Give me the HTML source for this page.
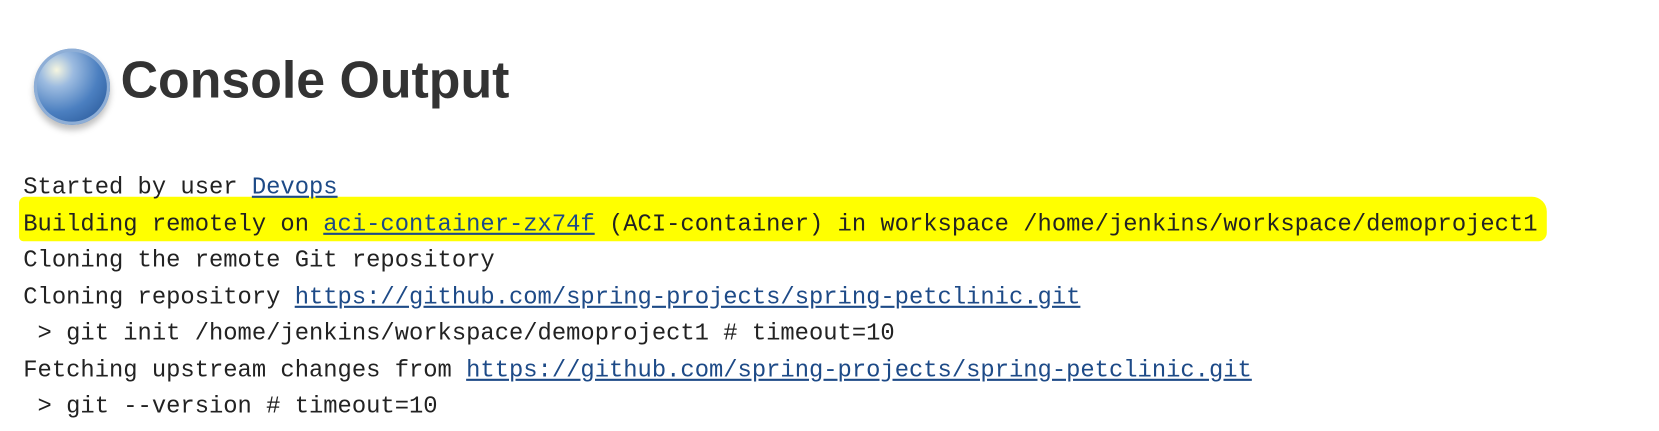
<!DOCTYPE html>
<html style="margin:0;padding:0;width:1659px;height:431px;overflow:hidden;"><head><style>
body{margin:0;width:1659px;height:431px;background:#fff;overflow:hidden;position:relative;font-family:"Liberation Sans",sans-serif;}
#c{position:absolute;left:0;top:0;width:1659px;height:431px;overflow:hidden;}
#w{position:absolute;left:0;top:0;width:1568px;height:407px;transform:scale(1.058);transform-origin:0 0;}
h1{position:absolute;left:114px;top:44px;margin:0;font-size:49px;font-weight:bold;color:#333;line-height:64px;white-space:nowrap;}
.ball{position:absolute;left:32px;top:46px;width:72px;height:72px;border-radius:50%;background:radial-gradient(circle at 30% 28%,#f6f6e0 0,#9cbbe0 22%,#4b7fc0 55%,#2c5c9c 85%);box-shadow:0 5px 6px rgba(0,0,0,.25),inset 0 0 0 3px #8eaed6;}
.hl{position:absolute;left:18px;top:186px;width:1444px;height:42px;background:#ffff00;border-radius:6px 14px 8px 4px;}
pre{position:absolute;left:22px;top:160px;margin:0;font-family:"Liberation Mono",monospace;font-size:22.5px;line-height:34.5px;color:#222;white-space:pre;}
a{color:#1d4a87;text-decoration:underline;}
</style></head><body><div id="c"><div id="w">
<div class="ball"></div>
<h1>Console Output</h1>
<div class="hl"></div>
<pre>Started by user <a>Devops</a>
Building remotely on <a>aci-container-zx74f</a> (ACI-container) in workspace /home/jenkins/workspace/demoproject1
Cloning the remote Git repository
Cloning repository <a>https://github.com/spring-projects/spring-petclinic.git</a>
 &gt; git init /home/jenkins/workspace/demoproject1 # timeout=10
Fetching upstream changes from <a>https://github.com/spring-projects/spring-petclinic.git</a>
 &gt; git --version # timeout=10
 &gt; git fetch --tags --progress https://github.com/spring-projects/spring-petclinic.git</pre>
</div></div></body></html>
